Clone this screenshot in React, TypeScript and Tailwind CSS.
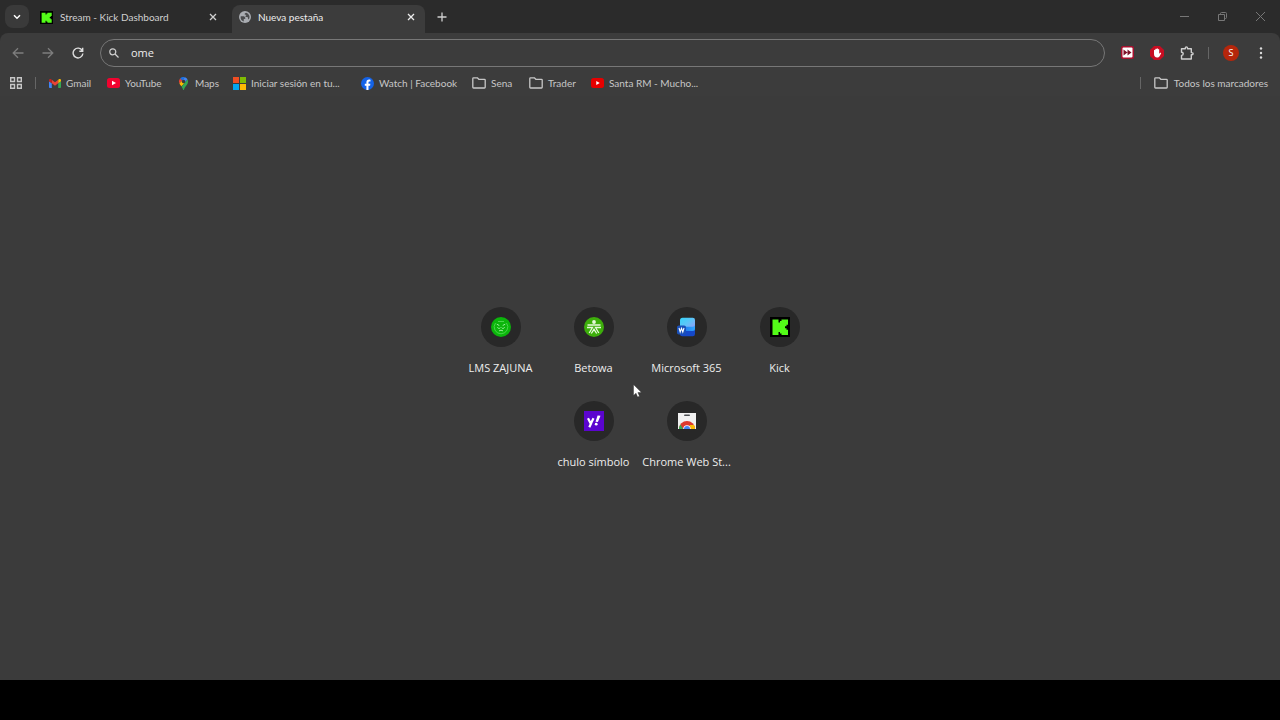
import type { ReactNode } from "react";

type IconProps = { className?: string };

function KickIcon({ className }: IconProps) {
  return (
    <svg viewBox="0 0 20 20" className={className} aria-hidden="true">
      <path d="M0 0h20v20H0z" fill="#000" />
      <path
        d="M2.500 2.500h6v3h1.500V4h1.500V2.500H18v5.200h-1.500v1.500H15v2h1.500v1.500H18v5.200h-6.500v-1.500H10v-1.500H8.500v3h-6z"
        fill="#53fc18"
      />
    </svg>
  );
}

function GlobeIcon({ className }: IconProps) {
  return (
    <svg viewBox="0 0 24 24" className={className} aria-hidden="true">
      <circle cx="12" cy="12" r="12" fill="#a9acb1" />
      <path
        d="M3.500 10.500h5.300c2 0 2.200 1.100 3.300 2.200 1 1.100 1.100 3.300-1.100 3.300H9.500v4.800A9 9 0 0 1 3.500 10.500zM14.500 3.400a9 9 0 0 1 5 13.600c-.9-1.100-1.600-1.500-1.600-2.600 0-1.500-1-2.200-2.200-2.200h-1.500c-1.800-.2-2-3.300.2-3.300V7.800c-1.100-.6-3 .6-3-1.700 0-1.400 1.300-2.600 3.100-2.700z"
        fill="#4a4b4d"
      />
    </svg>
  );
}

function GmailIcon({ className }: IconProps) {
  return (
    <svg viewBox="0 0 24 18" className={className} aria-hidden="true">
      <path d="M1.600 18h4V8.700L0 4.500v11.900C0 17.300.7 18 1.600 18z" fill="#4285f4" />
      <path d="M18.400 18h4c.9 0 1.600-.7 1.600-1.600V4.500l-5.600 4.200z" fill="#34a853" />
      <path d="M18.400 1.600v7.100L24 4.500V2.300c0-2-2.300-3.200-3.900-2z" fill="#fbbc04" />
      <path d="M5.600 8.700V1.600L12 6.400l6.400-4.800v7.100L12 13.500z" fill="#ea4335" />
      <path d="M0 2.300v2.200l5.600 4.200V1.600L3.900.3C2.300-.9 0 .3 0 2.300z" fill="#c5221f" />
    </svg>
  );
}

function YouTubeIcon({ className }: IconProps) {
  return (
    <svg viewBox="0 0 26 20" className={className} aria-hidden="true">
      <rect width="26" height="20" rx="5" fill="#f0032f" />
      <path d="m10 5.500 8 4.500-8 4.500z" fill="#fff" />
    </svg>
  );
}

function YouTubeRedIcon({ className }: IconProps) {
  return (
    <svg viewBox="0 0 26 20" className={className} aria-hidden="true">
      <rect width="26" height="20" rx="5" fill="#e60000" />
      <path d="m10.500 6 7 4-7 4z" fill="#fff" />
    </svg>
  );
}

function MapsIcon({ className }: IconProps) {
  return (
    <svg viewBox="0 0 92 132" className={className} aria-hidden="true">
      <path d="M60 2.200A46 46 0 0 0 10.700 16.400l21.800 18.300z" fill="#1a73e8" />
      <path d="M10.700 16.400A46 46 0 0 0 4.600 65.200l27.900-30.500z" fill="#ea4335" />
      <path d="M46.200 28.500a17.600 17.600 0 0 1 13.500 29L87 25A46 46 0 0 0 60 2.200L32.600 34.800a17.600 17.600 0 0 1 13.600-6.300z" fill="#4285f4" />
      <path d="M46.200 63.800a17.600 17.600 0 0 1-13.500-29L4.600 65.200c4.700 10.400 12.500 18.800 20.600 29.400l34.400-37a17.600 17.600 0 0 1-13.400 6.200z" fill="#fbbc04" />
      <path d="M59.100 109.200C74.500 85 92.500 74 92.500 46.300A46 46 0 0 0 87 25L25.200 98.600c2.600 3.400 5.300 7.300 7.900 11.300 9.400 14.500 6.800 23.100 13 23.100s3.600-9.300 13-23.800z" fill="#34a853" />
    </svg>
  );
}

function MicrosoftIcon({ className }: IconProps) {
  return (
    <svg viewBox="0 0 13 13" className={className} aria-hidden="true">
      <path d="M0 0h6v6H0z" fill="#f04e23" />
      <path d="M7 0h6v6H7z" fill="#80bb03" />
      <path d="M0 7h6v6H0z" fill="#05a6f0" />
      <path d="M7 7h6v6H7z" fill="#feb903" />
    </svg>
  );
}

function FacebookIcon({ className }: IconProps) {
  return (
    <svg viewBox="0 0 24 24" className={className} aria-hidden="true">
      <circle cx="12" cy="12" r="12" fill="#1463e8" />
      <path d="M10 24v-8H7v-3.600h3v-2.600C10 6.500 11.900 4.600 15 4.600c.8 0 1.700.1 2.500.3v3.200h-1.700c-1.500 0-2 .8-2 2v2.300h3.500l-.6 3.600h-2.900v8c-1.200.2-2.600.2-3.800 0z" fill="#fff" />
    </svg>
  );
}

function FolderIcon({ className }: IconProps) {
  return (
    <svg viewBox="0 0 14 12" className={className} fill="none" stroke="#c7c7c7" strokeWidth="1.300" strokeLinejoin="round" aria-hidden="true">
      <path d="M.8 1.500c0-.4.3-.7.700-.7h3.800l1.500 1.500h5.700c.4 0 .7.3.7.7v7.300c0 .4-.3.700-.7.700h-11c-.4 0-.7-.3-.7-.7z" />
    </svg>
  );
}

function AppsIcon({ className }: IconProps) {
  return (
    <svg viewBox="0 0 12 12" className={className} fill="none" stroke="#c7c7c7" strokeWidth="1.400" aria-hidden="true">
      <path d="M.7.700h3.800v3.800H.7zM7.500.7h3.800v3.800H7.500zM.7 7.500h3.800v3.800H.7zM7.500 7.500h3.800v3.800H7.500z" />
    </svg>
  );
}

function CloseIcon({ className }: IconProps) {
  return (
    <svg viewBox="0 0 8 8" className={className} fill="none" stroke="currentColor" strokeWidth="1.300" aria-hidden="true">
      <path d="m1 1 6 6M7 1 1 7" />
    </svg>
  );
}

function ZajunaIcon({ className }: IconProps) {
  return (
    <svg viewBox="0 0 20 20" className={className} fill="none" aria-hidden="true">
      <circle cx="10" cy="10" r="10" fill="#0bb50b" />
      <path d="M4.500 6A6.800 6.800 0 0 0 10 16.800 6.800 6.800 0 0 0 15.500 6" stroke="#4fd84f" strokeWidth=".9" />
      <path d="M7 4.500h6" stroke="#4fd84f" strokeWidth=".9" />
      <path d="M5.800 7.200l2.500 1.300M14.200 7.200l-2.500 1.300M6.500 10c1 2.300 2 2 2.800.4M13.500 10c-1 2.300-2 2-2.800.4M8 14c1.200-1 2.800-1 4 0" stroke="#9cf09c" strokeWidth="1" />
    </svg>
  );
}

function BetowaIcon({ className }: IconProps) {
  return (
    <svg viewBox="0 0 20 20" className={className} fill="none" aria-hidden="true">
      <circle cx="10" cy="10" r="10" fill="#3dae0b" />
      <circle cx="10" cy="5" r="1.900" fill="#e6f9dc" />
      <path d="M3.500 8h13M3 10.500h5.500L5.200 16M17 10.500h-5.500l3.300 5.500M7.300 16.500 10 12.300l2.700 4.200" stroke="#e6f9dc" strokeWidth="1.300" />
    </svg>
  );
}

function WordIcon({ className }: IconProps) {
  return (
    <svg viewBox="0 0 20 20" className={className} aria-hidden="true">
      <defs>
        <linearGradient id="word-top" x1="0" y1="0" x2="1" y2="1">
          <stop offset="0" stopColor="#35d4fa" />
          <stop offset=".5" stopColor="#5fc4f8" />
          <stop offset="1" stopColor="#9c95fa" />
        </linearGradient>
        <linearGradient id="word-mid" x1="0" y1="0" x2="1" y2="0">
          <stop offset="0" stopColor="#1b6be8" />
          <stop offset="1" stopColor="#30a8ff" />
        </linearGradient>
      </defs>
      <path d="M3 12h15v5a2.200 2.200 0 0 1-2.200 2.200H5.200A2.200 2.200 0 0 1 3 17z" fill="#1548c8" />
      <path d="M3 9a2.500 2.500 0 0 1 2.500-2.500H18v5A2.500 2.500 0 0 1 15.500 14H3z" fill="url(#word-mid)" />
      <path d="M3 3.200A2.500 2.500 0 0 1 5.500.7h10.300A2.200 2.200 0 0 1 18 2.900v4.300a2.500 2.500 0 0 1-2.500 2.500h-10A2.500 2.500 0 0 0 3 12z" fill="url(#word-top)" />
      <rect x="0" y="8.500" width="9" height="9" rx="1.800" fill="#1a50b8" />
      <path d="m2 11 1.200 4 1.300-3.600L5.800 15 7 11" stroke="#fff" strokeWidth="1.100" fill="none" />
    </svg>
  );
}

function YahooIcon({ className }: IconProps) {
  return (
    <svg viewBox="0 0 20 20" className={className} aria-hidden="true">
      <path d="M0 0h20v20H0z" fill="#5b05cf" />
      <path d="m4 7.300 2.800 5.500L9.500 7.300M7.300 12l-2 4.300" stroke="#fff" strokeWidth="2.200" fill="none" />
      <path d="m13.600 4.500 2.900.2-2.600 6.300-2.400-.2z" fill="#fff" />
      <circle cx="12.200" cy="13.200" r="1.400" fill="#fff" />
    </svg>
  );
}

function WebStoreIcon({ className }: IconProps) {
  return (
    <svg viewBox="0 0 20 20" className={className} aria-hidden="true">
      <path d="M1 2h18v16H1z" fill="#f1f1f1" />
      <rect x="7" y="3.500" width="6" height="1.600" rx=".8" fill="#4a4d51" />
      <path d="M2 18a8 8 0 0 1 16 0z" fill="#dc3a2e" />
      <path d="M2 18a8 8 0 0 1 1.400-4.500L6.200 18z" fill="#34a853" />
      <path d="M18 18a8 8 0 0 0-1-4h-4.500l1.500 4z" fill="#fbbc04" />
      <path d="M6.200 18a3.800 3.800 0 0 1 7.600 0z" fill="#fff" />
      <path d="M7 18a3 3 0 0 1 6 0z" fill="#4285f4" />
    </svg>
  );
}

const BOOKMARKS = [
  { label: "Gmail", icon: <GmailIcon className="h-[9px] w-3" />, width: "w-[58px]" },
  { label: "YouTube", icon: <YouTubeIcon className="h-[10px] w-[13px]" />, width: "w-[70px]" },
  { label: "Maps", icon: <MapsIcon className="h-[13px] w-[13px]" />, width: "w-[56px]" },
  { label: "Iniciar sesión en tu...", icon: <MicrosoftIcon className="h-[13px] w-[13px]" />, width: "w-[128px]" },
  { label: "Watch | Facebook", icon: <FacebookIcon className="h-[13px] w-[13px]" />, width: "w-[111px]" },
  { label: "Sena", icon: <FolderIcon className="h-3 w-[14px]" />, width: "w-[57px]" },
  { label: "Trader", icon: <FolderIcon className="h-3 w-[14px]" />, width: "w-[62px]" },
  { label: "Santa RM - Mucho...", icon: <YouTubeRedIcon className="h-[10px] w-[13px]" />, width: "w-[112px]" },
];

const SHORTCUTS = [
  { label: "LMS ZAJUNA", icon: <ZajunaIcon className="h-5 w-5" /> },
  { label: "Betowa", icon: <BetowaIcon className="h-5 w-5" /> },
  { label: "Microsoft 365", icon: <WordIcon className="h-5 w-5" /> },
  { label: "Kick", icon: <KickIcon className="h-5 w-5" /> },
  { label: "chulo símbolo", icon: <YahooIcon className="h-5 w-5" /> },
  { label: "Chrome Web St...", icon: <WebStoreIcon className="h-5 w-5" /> },
];

function IconButton({ label, children, className = "" }: { label: string; children: ReactNode; className?: string }) {
  return (
    <button type="button" aria-label={label} className={`flex shrink-0 items-center justify-center ${className}`}>
      {children}
    </button>
  );
}

function TabStrip() {
  return (
    <header className="flex h-[33px] items-end bg-[#2b2b2b] font-['Lato','Open_Sans',sans-serif] text-[#d0d0d0]">
      <div className="flex h-[33px] flex-1 items-end pl-[5px]">
        <IconButton label="Buscar pestañas" className="mb-[5px] h-[23px] w-6 rounded-lg bg-[#3a3a3a] text-white">
          <svg viewBox="0 0 8 6" className="h-1.5 w-2" fill="none" stroke="currentColor" strokeWidth="1.500">
            <path d="m1 1.200 3 3 3-3" />
          </svg>
        </IconButton>
        <div className="flex h-7 w-[203px] items-center pb-1 pl-[11px] pr-[11px]">
          <KickIcon className="h-[13px] w-[13px]" />
          <span className="ml-[7px] flex-1 truncate text-[10px] leading-4">Stream - Kick Dashboard</span>
          <IconButton label="Cerrar pestaña" className="h-4 w-4">
            <CloseIcon className="h-2 w-2" />
          </IconButton>
        </div>
        <div className="flex h-7 w-[193px] items-center rounded-t-lg bg-[#3c3c3c] pb-1 pl-[7px] pr-1.5 text-[#ededed]">
          <GlobeIcon className="h-3 w-3" />
          <span className="ml-[7px] flex-1 truncate text-[10px] leading-4">Nueva pestaña</span>
          <IconButton label="Cerrar pestaña" className="h-4 w-4">
            <CloseIcon className="h-2 w-2" />
          </IconButton>
        </div>
        <IconButton label="Nueva pestaña" className="mb-1 ml-2 h-6 w-[18px]">
          <svg viewBox="0 0 10 10" className="h-[10px] w-[10px]" stroke="currentColor" strokeWidth="1.300">
            <path d="M5 .5v9M.5 5h9" />
          </svg>
        </IconButton>
      </div>
      <div className="flex h-[33px] pr-px text-[#777777]">
        <IconButton label="Minimizar" className="w-[38px]">
          <svg viewBox="0 0 9 9" className="h-[9px] w-[9px]" stroke="currentColor">
            <path d="M0 4.500h9" />
          </svg>
        </IconButton>
        <IconButton label="Restaurar" className="w-[38px]">
          <svg viewBox="0 0 9 9" className="h-[9px] w-[9px]" fill="none" stroke="currentColor">
            <path d="M.5 2.500h6v6h-6zM2.500 2.500v-1a1 1 0 0 1 1-1h4a1 1 0 0 1 1 1v4a1 1 0 0 1-1 1h-1" />
          </svg>
        </IconButton>
        <IconButton label="Cerrar" className="w-[38px]">
          <svg viewBox="0 0 9 9" className="h-[9px] w-[9px]" stroke="currentColor">
            <path d="m0 0 9 9M9 0 0 9" />
          </svg>
        </IconButton>
      </div>
    </header>
  );
}

function Toolbar() {
  return (
    <div className="flex h-[39px] items-center rounded-t-lg bg-[#3c3c3c] pl-[3px] pr-1">
      <IconButton label="Atrás" className="h-[30px] w-[30px] text-[#7d7d7d]">
        <svg viewBox="0 0 12 12" className="h-3 w-3" fill="none" stroke="currentColor" strokeWidth="1.300">
          <path d="M11.500 6H1.500M6 1.200 1.200 6 6 10.800" />
        </svg>
      </IconButton>
      <IconButton label="Adelante" className="h-[30px] w-[30px] text-[#7d7d7d]">
        <svg viewBox="0 0 12 12" className="h-3 w-3" fill="none" stroke="currentColor" strokeWidth="1.300">
          <path d="M.5 6h10M6 1.200 10.800 6 6 10.800" />
        </svg>
      </IconButton>
      <IconButton label="Volver a cargar" className="h-[30px] w-[30px] text-[#dedede]">
        <svg viewBox="0 0 12 12" className="h-3 w-3" fill="none" stroke="currentColor" strokeWidth="1.400">
          <path d="M10.300 3.600A4.900 4.900 0 1 0 10.900 6.500M10.700.8v3.400H7.300" />
        </svg>
      </IconButton>
      <label className="ml-[7px] flex h-7 min-w-0 flex-1 items-center rounded-full border border-[#777777] pl-2 text-[#d0d0d0]">
        <svg viewBox="0 0 10 10" className="h-[10px] w-[10px]" fill="none" stroke="currentColor" strokeWidth="1.200">
          <circle cx="3.800" cy="3.800" r="3" />
          <path d="m6 6 3.500 3.500" />
        </svg>
        <input
          type="text"
          defaultValue="ome"
          aria-label="Barra de direcciones"
          className="ml-3 min-w-0 flex-1 bg-transparent text-[11px] leading-4 text-[#ededed] outline-none"
        />
      </label>
      <IconButton label="Adelantar video" className="ml-[7px] h-[30px] w-[30px]">
        <svg viewBox="0 0 13 13" className="h-[13px] w-[13px]">
          <rect width="13" height="13" rx="2" fill="#a8102e" />
          <rect x="1.500" y="1.500" width="10" height="10" rx="1" fill="#fff" />
          <path d="m2.500 3.500 4 3-4 3zM6.500 3.500l4 3-4 3z" fill="#7c1029" />
        </svg>
      </IconButton>
      <IconButton label="Bloqueador de anuncios" className="h-[30px] w-[30px]">
        <svg viewBox="0 0 14 14" className="h-[14px] w-[14px]">
          <path d="M4.100 0h5.800L14 4.100v5.800L9.900 14H4.100L0 9.900V4.100z" fill="#c70d22" />
          <path d="M4 8V4.200a.7.700 0 0 1 1.300 0V3.100a.7.700 0 0 1 1.300 0v-.3a.7.700 0 0 1 1.300 0v.6a.7.700 0 0 1 1.300 0v4.300l.9-.9c.6-.4 1.300.1 1 .6L9.600 10.200c-.5.900-1.300 1.400-2.500 1.400C5.200 11.600 4 10 4 8z" fill="#fff" />
        </svg>
      </IconButton>
      <IconButton label="Extensiones" className="h-[30px] w-[30px] text-[#cfcfcf]">
        <svg viewBox="0 0 14 14" className="h-[14px] w-[14px]" fill="none" stroke="currentColor" strokeWidth="1.400" strokeLinejoin="round">
          <path d="M1.500 2.700h3.800V2a1.100 1.100 0 0 1 2.200 0v.7h3.800v3.900h.7a1.100 1.100 0 0 1 0 2.200h-.7v4.200H1.500V9.400c2.300 0 2.300-3.200 0-3.200z" />
        </svg>
      </IconButton>
      <span className="mx-[6px] h-3 w-px bg-[#666666]" />
      <IconButton label="Perfil" className="ml-2 h-4 w-4 rounded-full bg-[#b5260b] text-[9px] leading-4 text-white">
        S
      </IconButton>
      <IconButton label="Menú" className="ml-[7px] h-[30px] w-[30px] text-[#dddddd]">
        <svg viewBox="0 0 4 14" className="h-[14px] w-1" fill="currentColor">
          <circle cx="2" cy="2.500" r="1.200" />
          <circle cx="2" cy="7" r="1.200" />
          <circle cx="2" cy="11.500" r="1.200" />
        </svg>
      </IconButton>
    </div>
  );
}

function BookmarksBar() {
  return (
    <nav
      aria-label="Marcadores"
      className="flex h-6 items-center bg-[#3c3c3c] pb-0.5 pl-[10px] pr-3 font-['Lato','Open_Sans',sans-serif] text-[10px] leading-4 text-[#c7c7c7]"
    >
      <IconButton label="Aplicaciones" className="h-4 w-3">
        <AppsIcon className="h-3 w-3" />
      </IconButton>
      <span className="mx-[13px] h-3 w-px bg-[#666666]" />
      {BOOKMARKS.map((bookmark) => (
        <a key={bookmark.label} href="#" className={`flex shrink-0 items-center gap-[5px] whitespace-nowrap ${bookmark.width}`}>
          <span className="shrink-0">{bookmark.icon}</span>
          {bookmark.label}
        </a>
      ))}
      <span className="ml-auto mr-[13px] h-3 w-px bg-[#666666]" />
      <a href="#" className="flex shrink-0 items-center gap-1.5 whitespace-nowrap">
        <FolderIcon className="h-3 w-[14px]" />
        Todos los marcadores
      </a>
    </nav>
  );
}

function Pointer() {
  return (
    <svg viewBox="0 0 9 14" className="absolute left-1/2 top-[288px] -ml-[7px] h-[14px] w-[9px]" aria-hidden="true">
      <path d="M.5.500v11L3 9.200l1.600 3.800 1.900-.8-1.600-3.600h3.600z" fill="#fff" stroke="#222" strokeWidth=".4" />
    </svg>
  );
}

export default function App() {
  return (
    <div className="flex min-h-screen flex-col bg-black font-['Open_Sans','Noto_Sans',sans-serif]">
      <div className="bg-[#2b2b2b]">
        <TabStrip />
        <Toolbar />
      </div>
      <BookmarksBar />
      <main className="relative flex flex-1 justify-center bg-[#3b3b3b] pt-[211px]">
        <ul className="flex w-[372px] flex-wrap content-start justify-center">
          {SHORTCUTS.map((shortcut) => (
            <li key={shortcut.label} className="w-[93px]">
              <a href="#" className="flex h-[94px] flex-col items-center gap-[13px] text-[11px] leading-4 text-[#ededed]">
                <span className="flex h-10 w-10 items-center justify-center rounded-full bg-[#282828]">{shortcut.icon}</span>
                <span className="whitespace-nowrap">{shortcut.label}</span>
              </a>
            </li>
          ))}
        </ul>
        <Pointer />
      </main>
      <div className="h-10 shrink-0" />
    </div>
  );
}
